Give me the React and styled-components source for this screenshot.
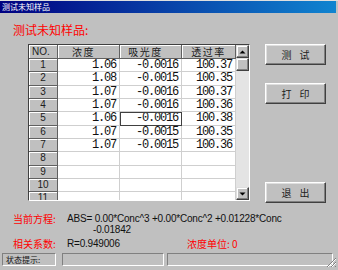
import React from 'react';
import styled, { createGlobalStyle } from 'styled-components';

const Global = createGlobalStyle`
  html, body { margin: 0; padding: 0; background: #c0c0c0; }
  body { font-family: "Noto Sans CJK SC", "Noto Sans", sans-serif; }
  * { box-sizing: border-box; }
`;

const Window = styled.div`
  width: 338px;
  height: 270px;
  background: #c0c0c0;
  border-top: 1px solid #dfdfdf;
  display: flex;
  flex-direction: column;
  overflow: hidden;
`;

const TitleBar = styled.div`
  height: 12px;
  flex: none;
  margin-right: 2px;
  padding-left: 2px;
  background: linear-gradient(90deg, #000080, #1084d0);
  color: #fff;
  font-size: 8px;
  line-height: 12px;
  white-space: nowrap;
`;

const Body = styled.div`
  flex: 1;
  display: flex;
  flex-direction: column;
  padding: 10px 0 0 13px;
`;

const Heading = styled.div`
  color: #ff0000;
  font-size: 12px;
  line-height: 14px;
  height: 14px;
`;

const MainRow = styled.div`
  display: flex;
  align-items: flex-start;
  margin-top: 7px;
  padding-left: 15px;
`;

const GridFrame = styled.div`
  width: 222px;
  height: 157px;
  display: flex;
  border-top: 1px solid #404040;
  border-left: 1px solid #404040;
  border-right: 1px solid #ffffff;
  border-bottom: 1px solid #ffffff;
`;

const Table = styled.div`
  width: 207px;
  height: 155px;
  overflow: hidden;
  display: grid;
  grid-template-columns: 29px 62px 62px 54px;
  grid-template-rows: 14px;
  grid-auto-rows: 13.333px;
  align-content: start;
  background: #fff;
`;

const FixedCell = styled.div`
  background: #c0c0c0;
  border-right: 1px solid #606060;
  border-bottom: 1px solid #606060;
  box-shadow: inset 1px 1px #ffffff;
  color: #202020;
  text-align: ${p => p.$align || 'center'};
  padding-left: ${p => (p.$align === 'left' ? '3px' : '0')};
  padding-right: ${p => p.$pr || 0}px;
  white-space: nowrap;
  overflow: hidden;
`;

const HeadCell = styled(FixedCell)`
  font-size: 10px;
  letter-spacing: 1.5px;
  line-height: 13px;
`;

const HeadNo = styled(FixedCell)`
  font-family: "Liberation Sans", Arial, sans-serif;
  font-size: 10px;
  line-height: 13px;
`;

const IndexCell = styled(FixedCell)`
  font-family: "Liberation Sans", Arial, sans-serif;
  font-size: 10px;
  line-height: 12px;
`;

const DataCell = styled.div`
  background: #fff;
  border-right: 1px solid #cfcfcf;
  border-bottom: 1px solid #cfcfcf;
  text-align: right;
  padding-right: 3px;
  font-family: "Liberation Mono", "DejaVu Sans Mono", monospace;
  font-size: 12px;
  letter-spacing: -1.2px;
  line-height: 12px;
  color: #101010;
  white-space: nowrap;
  overflow: hidden;
  ${p => (p.$focus ? 'outline: 1px solid #404040; outline-offset: -1px;' : '')}
`;

const ScrollBar = styled.div`
  width: 13px;
  height: 155px;
  display: flex;
  flex-direction: column;
  background: #e4e4e4;
`;

const ScrollBtn = styled.div`
  width: 13px;
  height: 13px;
  flex: none;
  background: #c0c0c0;
  border: 1px solid;
  border-color: #dfdfdf #404040 #404040 #dfdfdf;
  box-shadow: inset -1px -1px #808080, inset 1px 1px #ffffff;
  display: flex;
  align-items: center;
  justify-content: center;
`;

const ScrollTrack = styled.div`
  flex: 1;
`;

const ButtonCol = styled.div`
  display: flex;
  flex-direction: column;
  margin-left: 15px;
  width: 61px;
`;

const Button = styled.div`
  height: 21px;
  margin-top: ${p => p.$mt || 0}px;
  background: #c0c0c0;
  border: 1px solid;
  border-color: #ffffff #404040 #404040 #ffffff;
  box-shadow: inset -1px -1px #808080, inset 1px 1px #dfdfdf;
  display: flex;
  align-items: center;
  justify-content: center;
  font-size: 10px;
  color: #202020;
  word-spacing: 6px;
`;

const EqBlock = styled.div`
  margin-top: 10px;
  display: flex;
  flex-direction: column;
`;

const EqRow = styled.div`
  display: flex;
  align-items: flex-start;
  margin-top: ${p => p.$mt || 0}px;
`;

const RedLabel = styled.div`
  color: #ff0000;
  font-size: 10px;
  line-height: 11px;
  width: ${p => p.$w || 54}px;
  flex: none;
  white-space: nowrap;
`;

const Value = styled.div`
  font-family: "Liberation Sans", Arial, sans-serif;
  font-size: 10px;
  line-height: 11px;
  letter-spacing: -0.2px;
  color: #101010;
  width: ${p => (p.$w ? p.$w + 'px' : 'auto')};
  flex: none;
  white-space: nowrap;
`;

const Indent = styled.div`
  padding-left: 26px;
`;

const StatusBar = styled.div`
  height: 17px;
  flex: none;
  display: flex;
  align-items: flex-start;
  padding: 0 0 0 2px;
  gap: 3px;
  position: relative;
`;

const Panel = styled.div`
  width: ${p => p.$w}px;
  height: 13px;
  margin-left: ${p => p.$ml || 0}px;
  border-top: 1px solid #808080;
  border-left: 1px solid #808080;
  border-bottom: 1px solid #ffffff;
  border-right: 1px solid #ffffff;
  font-size: 8px;
  line-height: 11px;
  padding-left: 3px;
  color: #101010;
  white-space: nowrap;
`;

const Grip = styled.svg`
  position: absolute;
  right: 1px;
  bottom: 2px;
`;

const rows = [
  ['1.06', '-0.0016', '100.37'],
  ['1.08', '-0.0015', '100.35'],
  ['1.07', '-0.0016', '100.37'],
  ['1.07', '-0.0016', '100.36'],
  ['1.06', '-0.0016', '100.38'],
  ['1.07', '-0.0015', '100.35'],
  ['1.07', '-0.0015', '100.36'],
  ['', '', ''],
  ['', '', ''],
  ['', '', ''],
  ['', '', ''],
];

const Arrow = ({ up }) => (
  <svg width="7" height="4" viewBox="0 0 7 4">
    {up ? <path d="M0.5 3.5 L3.5 0.5 L6.5 3.5 Z" fill="#000" /> : <path d="M0.5 0.5 L3.5 3.5 L6.5 0.5 Z" fill="#000" />}
  </svg>
);

export default function App() {
  return (
    <>
      <Global />
      <Window>
        <TitleBar>测试未知样品</TitleBar>
        <Body>
          <Heading>测试未知样品:</Heading>
          <MainRow>
            <GridFrame>
              <Table>
                <HeadNo $align="left">NO.</HeadNo>
                <HeadCell $pr={10}>浓度</HeadCell>
                <HeadCell $pr={10}>吸光度</HeadCell>
                <HeadCell>透过率</HeadCell>
                {rows.map((r, i) => (
                  <React.Fragment key={i}>
                    <IndexCell>{i + 1}</IndexCell>
                    <DataCell>{r[0]}</DataCell>
                    <DataCell $focus={i === 4}>{r[1]}</DataCell>
                    <DataCell>{r[2]}</DataCell>
                  </React.Fragment>
                ))}
              </Table>
              <ScrollBar>
                <ScrollBtn><Arrow up /></ScrollBtn>
                <ScrollBtn />
                <ScrollTrack />
                <ScrollBtn><Arrow /></ScrollBtn>
              </ScrollBar>
            </GridFrame>
            <ButtonCol>
              <Button>测 试</Button>
              <Button $mt={18}>打 印</Button>
              <Button $mt={78}>退 出</Button>
            </ButtonCol>
          </MainRow>
          <EqBlock>
            <EqRow>
              <RedLabel>当前方程:</RedLabel>
              <Value>
                ABS= 0.00*Conc^3 +0.00*Conc^2 +0.01228*Conc
                <Indent>-0.01842</Indent>
              </Value>
            </EqRow>
            <EqRow $mt={3}>
              <RedLabel>相关系数:</RedLabel>
              <Value $w={120}>R=0.949006</Value>
              <RedLabel $w={60}>浓度单位: 0</RedLabel>
            </EqRow>
          </EqBlock>
        </Body>
        <StatusBar>
          <Panel $w={54}>状态提示:</Panel>
          <Panel $w={102} $ml={3}>&nbsp;</Panel>
          <Panel $w={166}>&nbsp;</Panel>
          <Grip width="11" height="11" viewBox="0 0 11 11">
            <path d="M10 1 L1 10 M10 5 L5 10 M10 9 L9 10" stroke="#808080" strokeWidth="1" />
            <path d="M10 2 L2 10 M10 6 L6 10" stroke="#ffffff" strokeWidth="1" />
          </Grip>
        </StatusBar>
      </Window>
    </>
  );
}
